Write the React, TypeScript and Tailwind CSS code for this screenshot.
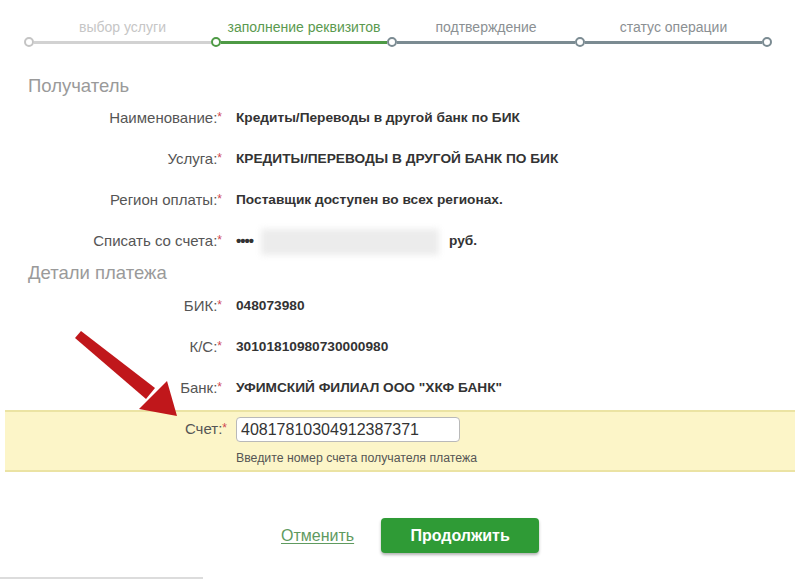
import React from 'react'

const font = { fontFamily: '"Liberation Sans", Arial, sans-serif' }

type Row = { label: string; value: React.ReactNode }

const recipient: Row[] = [
  { label: 'Наименование:', value: 'Кредиты/Переводы в другой банк по БИК' },
  { label: 'Услуга:', value: 'КРЕДИТЫ/ПЕРЕВОДЫ В ДРУГОЙ БАНК ПО БИК' },
  { label: 'Регион оплаты:', value: 'Поставщик доступен во всех регионах.' },
  {
    label: 'Списать со счета:',
    value: (
      <span className="flex items-center">
        <span className="text-[15px] tracking-[-1px]">••••</span>
        <span className="ml-[8px] inline-block h-[26px] w-[178px] bg-[#ececec] blur-[3px]" />
        <span className="ml-[10px]">руб.</span>
      </span>
    ),
  },
]

const details: Row[] = [
  { label: 'БИК:', value: '048073980' },
  { label: 'К/С:', value: '30101810980730000980' },
  { label: 'Банк:', value: 'УФИМСКИЙ ФИЛИАЛ ООО "ХКФ БАНК"' },
]

function Label({ text }: { text: string }) {
  return (
    <div className="w-[222px] shrink-0 text-right text-[15px] text-[#555]">
      {text}
      <span className="relative -top-[2px] text-[12px] text-[#d0454f]">*</span>
    </div>
  )
}

function Field({ row }: { row: Row }) {
  return (
    <div className="flex h-[41px] items-center">
      <Label text={row.label} />
      <div className="ml-[14px] text-[13.7px] font-bold text-[#333]">{row.value}</div>
    </div>
  )
}

function Stepper() {
  const steps = [
    { t: 'выбор услуги', w: 'w-[187px]', c: 'text-[#c6c6c6]' },
    { t: 'заполнение реквизитов', w: 'w-[176px]', c: 'text-[#5b9a4f]' },
    { t: 'подтверждение', w: 'w-[188px]', c: 'text-[#8b9093]' },
    { t: 'статус операции', w: 'w-[187px]', c: 'text-[#8b9093]' },
  ]
  return (
    <div className="h-[74px] pt-[18px]">
      <div className="ml-[29px] flex text-[14px]">
        {steps.map(s => (
          <div key={s.t} className={`${s.w} text-center leading-[18px] ${s.c}`}>
            {s.t}
          </div>
        ))}
      </div>
      <div className="ml-[24px] mt-[1px] flex items-center">
        <span className="h-[10px] w-[10px] rounded-full border-2 border-[#c4c4c4] bg-white" />
        <span className="h-[3px] w-[177px] bg-[#d2d2d2]" />
        <span className="h-[10px] w-[10px] rounded-full border-2 border-[#4e9a45] bg-white" />
        <span className="h-[3px] w-[166px] bg-[#4e9a45]" />
        <span className="h-[10px] w-[10px] rounded-full border-2 border-[#7b8b92] bg-white" />
        <span className="h-[3px] w-[178px] bg-[#7b8b92]" />
        <span className="h-[10px] w-[10px] rounded-full border-2 border-[#7b8b92] bg-white" />
        <span className="h-[3px] w-[177px] bg-[#7b8b92]" />
        <span className="h-[10px] w-[10px] rounded-full border-2 border-[#7b8b92] bg-white" />
      </div>
    </div>
  )
}

export default function App() {
  return (
    <div className="relative h-[579px] w-[800px] overflow-hidden bg-white" style={font}>
      <Stepper />

      <div className="ml-[28px] flex h-[24px] items-center text-[18.5px] text-[#9a9a9a]">Получатель</div>
      {recipient.map(r => (
        <Field key={r.label} row={r} />
      ))}

      <div className="ml-[28px] flex h-[22px] items-center text-[18.5px] text-[#9a9a9a]">Детали платежа</div>
      <div className="h-[2px]" />
      {details.map(r => (
        <Field key={r.label} row={r} />
      ))}

      <div className="mx-[5px] mt-[1px] h-[62px] border-y-2 border-[#ebe3a3] bg-[#fcf5c8]">
        <div className="flex pt-[5px]">
          <div className="flex h-[24px] w-[217px] items-center">
            <Label text="Счет:" />
          </div>
          <div className="ml-[14px]">
            <div className="flex h-[25px] w-[224px] items-center rounded-[4px] border border-[#b9b9b9] bg-white px-[4px] text-[16px] text-[#333]">
              40817810304912387371
            </div>
            <div className="mt-[7px] text-[12.3px] text-[#555]">Введите номер счета получателя платежа</div>
          </div>
        </div>
      </div>

      <div className="mt-[46px] flex items-center">
        <a className="ml-[281px] text-[16px] text-[#5f9a5f] underline underline-offset-2" href="#">
          Отменить
        </a>
        <button className="ml-[27px] h-[35px] w-[158px] rounded-[4px] bg-[#2f9b36] text-[16px] font-bold text-white shadow-[0_2px_3px_rgba(0,0,0,0.3)]">
          Продолжить
        </button>
      </div>

      <div className="mt-[24px] h-[2px] w-[203px] bg-[#dcdcdc]" />

      <svg className="absolute left-0 top-0" width="800" height="579" viewBox="0 0 800 579">
        <path d="M81 331 L155 388 L146 399 L75 338 Z" fill="#c0171b" />
        <path d="M177 416 L139 409 L167 381 Z" fill="#c0171b" />
      </svg>
    </div>
  )
}
